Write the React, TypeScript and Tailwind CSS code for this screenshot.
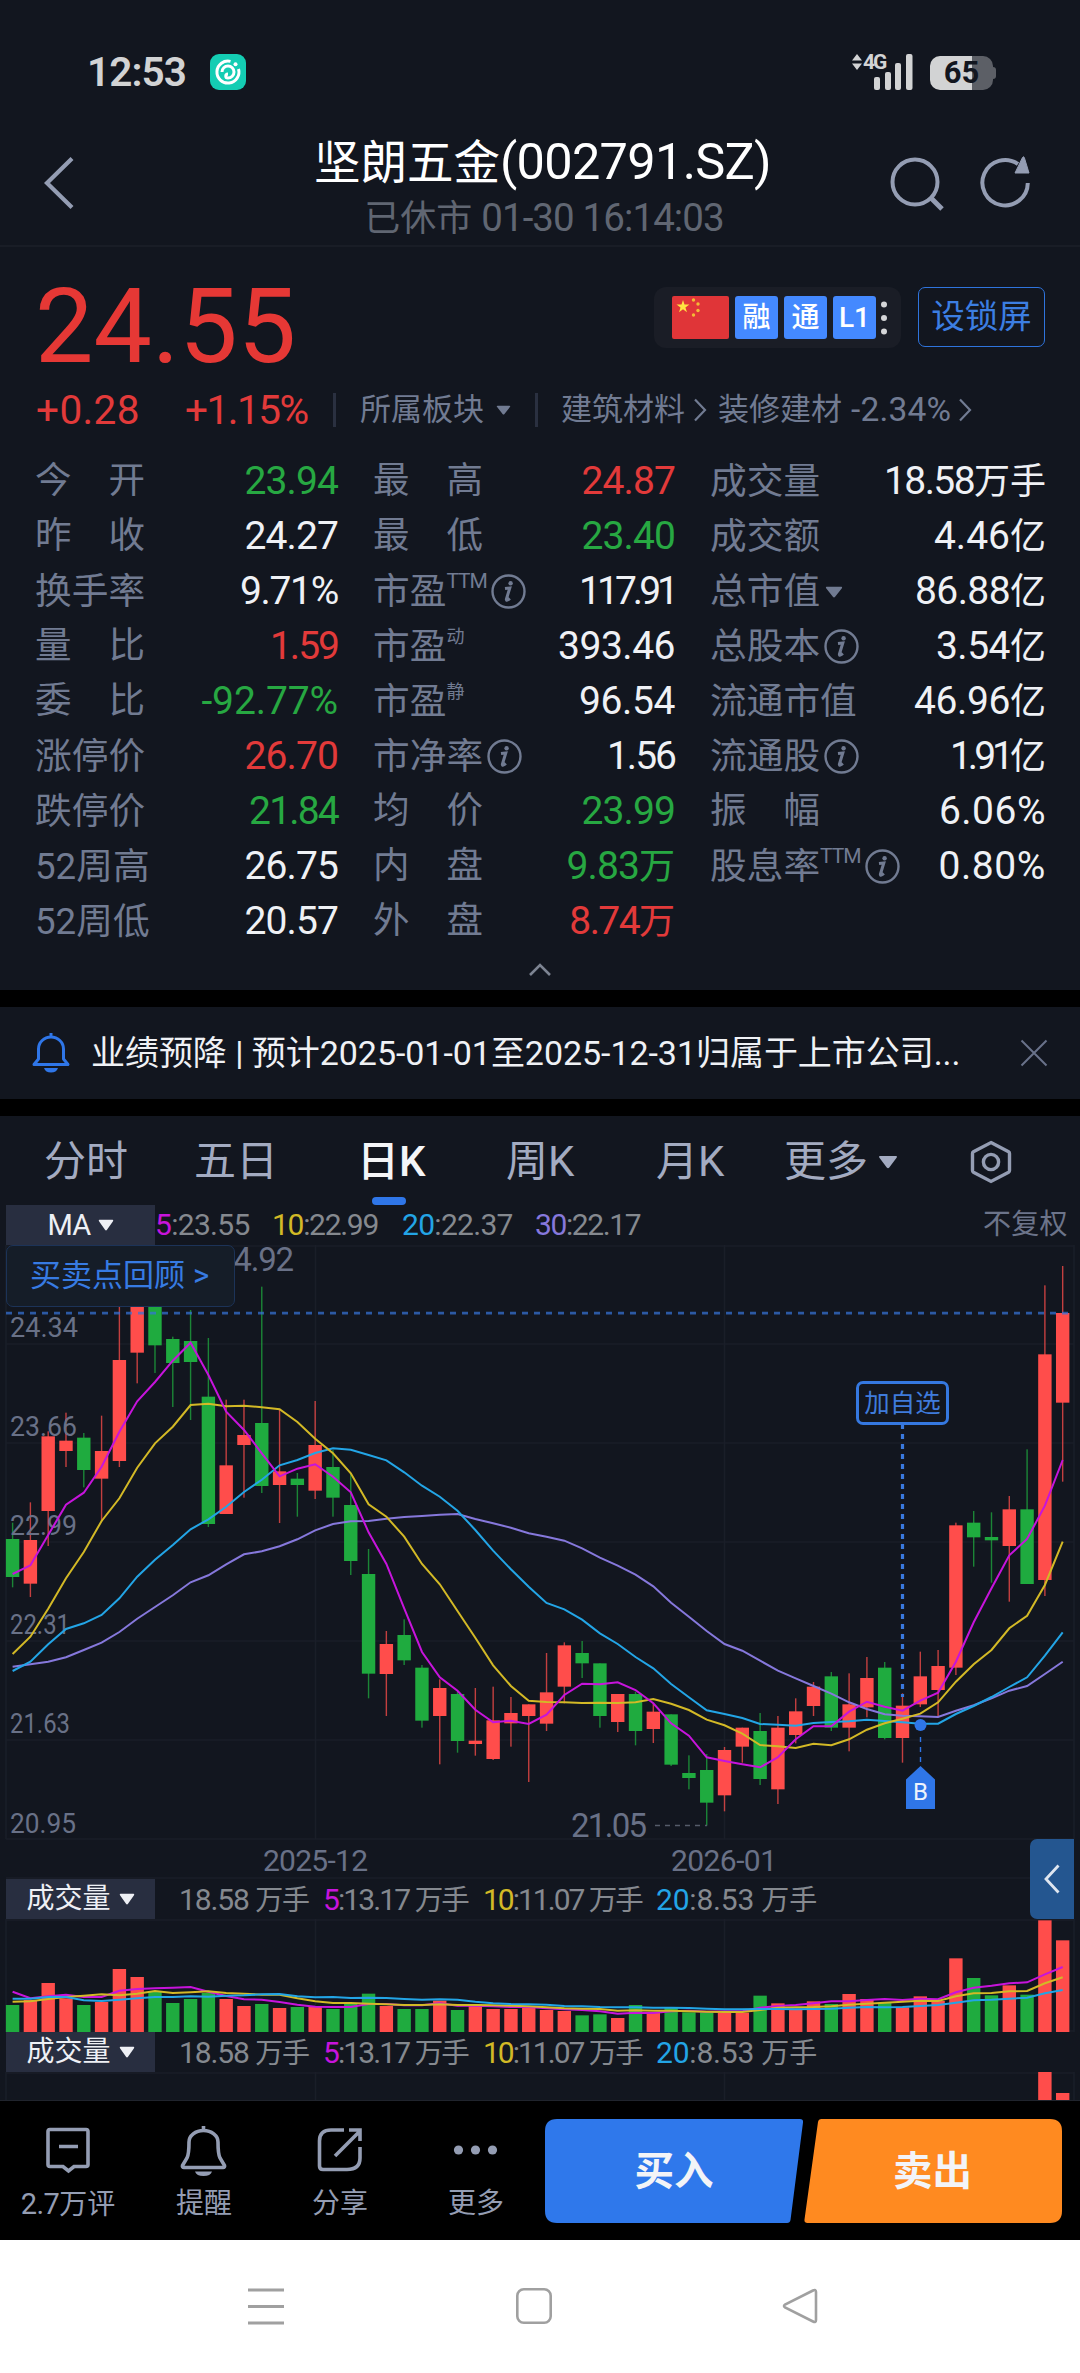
import React from "react";

const UP = "#ff4d4b";
const DOWN = "#1fab3f";
const GRID = "#1a1e28";

/* direction, high, open/close top, open/close bottom, low in thirds of a pixel */
type Candle = [number, number, number, number, number];
const CANDLES: Candle[] = [
  [0, 848, 897, 1011, 1042], [1, 787, 900, 1031, 1071], [1, 574, 589, 813, 918], [1, 518, 602, 633, 681],
  [0, 579, 593, 690, 742], [1, 527, 633, 716, 845], [1, 150, 360, 663, 681], [1, 100, 150, 338, 430],
  [0, 100, 150, 316, 399], [0, 290, 297, 369, 501], [0, 210, 303, 366, 540], [0, 294, 470, 852, 861],
  [1, 479, 676, 822, 822], [1, 479, 585, 615, 773], [0, 140, 549, 738, 759], [1, 510, 694, 735, 849],
  [0, 699, 716, 735, 830], [1, 483, 615, 752, 777], [0, 630, 681, 773, 830], [0, 700, 795, 963, 1005],
  [0, 927, 1002, 1301, 1375], [1, 1173, 1212, 1302, 1428], [0, 1138, 1185, 1261, 1275], [0, 1275, 1283, 1442, 1463],
  [1, 1318, 1344, 1428, 1573], [0, 1355, 1362, 1503, 1538], [1, 1344, 1502, 1512, 1547], [1, 1340, 1441, 1557, 1560],
  [1, 1371, 1419, 1450, 1520], [1, 1393, 1393, 1428, 1626], [1, 1239, 1357, 1451, 1473], [1, 1207, 1216, 1340, 1390],
  [0, 1203, 1239, 1270, 1314], [0, 1270, 1270, 1428, 1463], [1, 1362, 1362, 1446, 1476], [0, 1355, 1362, 1473, 1516],
  [1, 1390, 1415, 1467, 1509], [0, 1423, 1423, 1574, 1578], [0, 1546, 1599, 1614, 1648], [0, 1542, 1590, 1688, 1757],
  [1, 1521, 1530, 1666, 1714], [1, 1463, 1463, 1520, 1568], [0, 1419, 1473, 1617, 1635], [1, 1428, 1463, 1648, 1692],
  [1, 1375, 1414, 1485, 1510], [1, 1326, 1340, 1398, 1428], [0, 1296, 1309, 1463, 1473], [1, 1300, 1393, 1463, 1534],
  [1, 1251, 1314, 1402, 1432], [0, 1266, 1283, 1494, 1498], [1, 1360, 1397, 1494, 1568], [1, 1235, 1309, 1393, 1401],
  [1, 1230, 1278, 1350, 1430], [1, 848, 856, 1283, 1305], [0, 813, 848, 892, 980], [0, 817, 891, 901, 1028],
  [1, 768, 808, 918, 1085], [0, 628, 808, 1032, 1032], [1, 136, 343, 1020, 1068], [1, 78, 219, 488, 725],
];

const PRICE_MA: [string, number[]][] = [
  ["#8678dc", [1280, 1273, 1265, 1252, 1230, 1208, 1176, 1136, 1101, 1066, 1027, 1006, 973, 943, 934, 919, 898, 871, 852, 844, 843, 836, 831, 828, 824, 822, 837, 850, 863, 880, 890, 902, 925, 953, 977, 1004, 1039, 1088, 1130, 1173, 1212, 1232, 1262, 1292, 1315, 1338, 1361, 1387, 1407, 1423, 1427, 1429, 1431, 1412, 1396, 1375, 1352, 1338, 1302, 1265]],
  ["#23a5e6", [1293, 1265, 1213, 1167, 1150, 1125, 1075, 1010, 959, 915, 868, 838, 800, 756, 719, 676, 660, 639, 625, 629, 645, 661, 697, 737, 770, 812, 870, 932, 988, 1040, 1089, 1108, 1139, 1180, 1212, 1251, 1285, 1332, 1372, 1411, 1422, 1434, 1452, 1454, 1457, 1449, 1446, 1444, 1439, 1443, 1447, 1451, 1451, 1422, 1398, 1371, 1341, 1312, 1247, 1177]],
  ["#d3b926", [1242, 1190, 1106, 1015, 936, 843, 775, 683, 610, 560, 495, 491, 499, 497, 502, 508, 546, 596, 640, 700, 793, 830, 890, 972, 1033, 1113, 1193, 1276, 1338, 1382, 1386, 1387, 1389, 1388, 1389, 1387, 1377, 1391, 1410, 1439, 1456, 1481, 1515, 1519, 1524, 1511, 1516, 1498, 1469, 1450, 1436, 1421, 1387, 1325, 1273, 1230, 1165, 1127, 1035, 905]],
  ["#c714dc", [1002, 976, 885, 794, 758, 680, 575, 484, 426, 362, 308, 405, 515, 570, 640, 709, 686, 673, 710, 757, 877, 972, 1105, 1236, 1312, 1352, 1409, 1447, 1442, 1452, 1424, 1365, 1331, 1333, 1327, 1350, 1390, 1450, 1487, 1552, 1563, 1573, 1582, 1552, 1498, 1459, 1459, 1415, 1385, 1400, 1412, 1382, 1358, 1265, 1147, 1045, 946, 897, 797, 660]],
];

const VOLUMES = [405, 390, 339, 385, 405, 396, 297, 321, 363, 399, 387, 369, 387, 408, 402, 414, 411, 410, 417, 402, 371, 408, 417, 417, 392, 420, 402, 417, 417, 412, 420, 423, 436, 433, 444, 405, 428, 414, 427, 427, 428, 428, 377, 400, 416, 394, 402, 372, 387, 398, 412, 379, 393, 265, 324, 376, 346, 374, 151, 211];

const VOLUME_MA: [string, number[]][] = [
  ["#c714dc", [365, 385, 379, 374, 381, 381, 362, 357, 355, 353, 351, 365, 378, 388, 389, 396, 404, 410, 411, 411, 402, 402, 406, 406, 400, 407, 407, 409, 411, 411, 415, 418, 420, 424, 431, 428, 429, 424, 422, 425, 424, 424, 413, 408, 405, 400, 394, 394, 390, 387, 390, 386, 388, 367, 353, 347, 340, 337, 313, 291]],
  ["#d3b926", [395, 394, 387, 381, 377, 373, 376, 371, 363, 369, 367, 364, 369, 371, 374, 374, 385, 394, 399, 399, 401, 403, 405, 405, 403, 405, 405, 406, 407, 409, 412, 415, 416, 417, 422, 421, 422, 422, 424, 425, 426, 426, 420, 413, 412, 411, 409, 404, 401, 398, 395, 392, 393, 379, 370, 369, 364, 363, 340, 322]],
  ["#23a5e6", [386, 386, 381, 381, 391, 393, 389, 385, 381, 381, 379, 380, 377, 376, 373, 372, 379, 382, 381, 384, 383, 384, 387, 389, 388, 389, 395, 400, 402, 403, 404, 408, 409, 411, 412, 412, 413, 413, 414, 416, 418, 418, 417, 417, 418, 417, 416, 413, 411, 412, 411, 408, 405, 398, 391, 389, 386, 383, 370, 360]],
];

const cx = (i: number) => 12.6 + i * 17.798;
const line = (values: number[], offset: number) =>
  values.map((v, i) => `${cx(i).toFixed(1)},${(v / 3 - offset).toFixed(1)}`).join(" ");

const GREEN = "text-[#27a842]";
const RED = "text-[#e23a3a]";
const WHITE = "text-[#eff1f5]";

type Cell = { label: string; sup?: string; mark?: "info" | "drop"; value: string; unit?: string; tone: string; fit?: string };
const CELLS: (Cell | null)[] = [
  { label: "今开", value: "23.94", tone: GREEN },
  { label: "最高", value: "24.87", tone: RED },
  { label: "成交量", value: "18.58", unit: "万手", tone: WHITE, fit: "tracking-[-1.6px]" },
  { label: "昨收", value: "24.27", tone: WHITE },
  { label: "最低", value: "23.40", tone: GREEN },
  { label: "成交额", value: "4.46", unit: "亿", tone: WHITE, fit: "tracking-[0px]" },
  { label: "换手率", value: "9.71%", tone: WHITE, fit: "tracking-[-1.3px]" },
  { label: "市盈", sup: "TTM", mark: "info", value: "117.91", tone: WHITE, fit: "tracking-[-4px]" },
  { label: "总市值", mark: "drop", value: "86.88", unit: "亿", tone: WHITE, fit: "tracking-[-0.6px]" },
  { label: "量比", value: "1.59", tone: RED, fit: "tracking-[-2px]" },
  { label: "市盈", sup: "动", value: "393.46", tone: WHITE, fit: "tracking-[-0.5px]" },
  { label: "总股本", mark: "info", value: "3.54", unit: "亿", tone: WHITE, fit: "tracking-[-0.5px]" },
  { label: "委比", value: "-92.77%", tone: GREEN, fit: "tracking-[-0.1px]" },
  { label: "市盈", sup: "静", value: "96.54", tone: WHITE, fit: "tracking-[-0.4px]" },
  { label: "流通市值", value: "46.96", unit: "亿", tone: WHITE, fit: "tracking-[-0.4px]" },
  { label: "涨停价", value: "26.70", tone: RED },
  { label: "市净率", mark: "info", value: "1.56", tone: WHITE, fit: "tracking-[-2px]" },
  { label: "流通股", mark: "info", value: "1.91", unit: "亿", tone: WHITE, fit: "tracking-[-4px]" },
  { label: "跌停价", value: "21.84", tone: GREEN, fit: "tracking-[-1.8px]" },
  { label: "均价", value: "23.99", tone: GREEN },
  { label: "振幅", value: "6.06%", tone: WHITE, fit: "tracking-[0.5px]" },
  { label: "52周高", value: "26.75", tone: WHITE },
  { label: "内盘", value: "9.83", unit: "万", tone: GREEN },
  { label: "股息率", sup: "TTM", mark: "info", value: "0.80%", tone: WHITE, fit: "tracking-[0.6px]" },
  { label: "52周低", value: "20.57", tone: WHITE },
  { label: "外盘", value: "8.74", unit: "万", tone: RED, fit: "tracking-[-1.6px]" },
  null,
];

function InfoMark() {
  return (
    <svg className="ml-[4px] size-[35px] shrink-0" viewBox="0 0 35 35" fill="none">
      <circle cx="17.5" cy="17.5" r="16" stroke="#717b92" strokeWidth="2.4" />
      <circle cx="19.6" cy="9.3" r="2.2" fill="#717b92" />
      <path d="M14 14.600l4.800-.6-3.400 11.200c-.4 1.700 1.600 1 3.400-.8" stroke="#717b92" strokeWidth="3" />
    </svg>
  );
}

function Triangle({ className }: { className: string }) {
  return (
    <svg className={`shrink-0 ${className}`} viewBox="0 0 16 12" preserveAspectRatio="none">
      <path d="M1.6 0.8h12.8q1.4 0 .6 1.4l-6 8.6q-1 1.2-2 0l-6-8.6q-.8-1.4 .6-1.4z" fill="currentColor" />
    </svg>
  );
}

function Chevron({ className }: { className: string }) {
  return (
    <svg className={`h-6 w-3.5 shrink-0 ${className}`} viewBox="0 0 14 24" fill="none">
      <path d="M2 1.5l10 10.5-10 10.5" stroke="currentColor" strokeWidth="2.2" />
    </svg>
  );
}

function StatCell({ cell }: { cell: Cell }) {
  const spaced = cell.label.length === 2 && !cell.sup;
  return (
    <div className="flex h-[55px] items-center justify-between whitespace-nowrap">
      <div className="flex items-center text-[#717b92]">
        {spaced ? (
          <div className="flex w-[110px] justify-between text-[36.5px]">
            <span>{cell.label[0]}</span>
            <span>{cell.label[1]}</span>
          </div>
        ) : (
          <span className="text-[36.7px]">{cell.label}</span>
        )}
        {cell.sup && (
          <span className={cell.sup === "TTM" ? "-mt-[20px] text-[21px] tracking-[-1px]" : "-mt-[20px] text-[18px]"}>{cell.sup}</span>
        )}
        {cell.mark === "info" && <InfoMark />}
        {cell.mark === "drop" && <Triangle className="ml-[5px] h-[12px] w-[18px]" />}
      </div>
      <div className={`text-[39px] ${cell.tone}`}>
        <span className={cell.fit ?? "tracking-[-0.9px]"}>{cell.value}</span>
        {cell.unit && <span className="text-[36px]">{cell.unit}</span>}
      </div>
    </div>
  );
}

function StatusBar() {
  return (
    <div className="flex h-[108px] pt-[54px] pr-[84px] pl-[87px]">
      <span className="w-[123px] text-[40.5px] leading-[37px] font-semibold tracking-[-0.9px] text-[#d2d3d4]">12:53</span>
      <svg className="size-[36px]" viewBox="0 0 36 36" fill="none">
        <rect width="36" height="36" rx="9" fill="#14cdb3" />
        <path d="M20.5 7.4A11 11 0 1 0 28.5 15" stroke="#fff" strokeWidth="3" />
        <path d="M12 18a6 6 0 1 1 6 6c-3 0-3-4 0-4" stroke="#fff" strokeWidth="3" />
        <circle cx="25.5" cy="10.3" r="2" fill="#fff" />
      </svg>
      <div className="ml-auto flex">
        <svg className="h-[16px] w-[12px]" viewBox="0 0 12 16" fill="#d2d3d4">
          <path d="M6 0l5 6.5H1zM6 16l5-6.5H1z" />
        </svg>
        <span className="w-[10px] text-[21px] leading-[16px] font-bold tracking-[-2px] text-[#d2d3d4]">4G</span>
        <svg className="h-[36px] w-[41px]" viewBox="0 0 41 36" fill="#d2d3d4">
          <rect x="1" y="23" width="6" height="13" rx="2" />
          <rect x="12" y="18" width="6" height="18" rx="2" />
          <rect x="22" y="9" width="6" height="27" rx="2" />
          <rect x="33" y="0" width="6.5" height="36" rx="2" />
        </svg>
        <div className="mt-0.5 ml-[16px] flex h-[34px] w-[63px] items-center justify-center rounded-[10px] bg-linear-to-r from-[#d2d3d4] from-67% to-[#5c5f66] to-67% text-[31px] leading-[34px] font-bold text-[#12161f]">
          65
        </div>
        <div className="mt-[13px] h-[12px] w-[3px] rounded-r-full bg-[#5c5f66]" />
      </div>
    </div>
  );
}

function TitleBar() {
  return (
    <header className="grid h-[139px] grid-cols-[180px_1fr_200px] border-b-2 border-[#191d26]">
      <svg className="mt-[48px] ml-[43px] h-[54px] w-[32px]" viewBox="0 0 32 54" fill="none">
        <path d="M29 2.5L4 27l25 24.5" stroke="#949db3" strokeWidth="4.2" />
      </svg>
      <div className="flex flex-col items-center whitespace-nowrap">
        <h1 className="mt-[24px] ml-[25px] text-[46.500px] leading-[60px] text-white">
          坚朗五金<span className="text-[50.500px] tracking-[-0.7px]">(002791.SZ)</span>
        </h1>
        <p className="ml-[28px] text-[36px] leading-[50px] text-[#606672]">
          已休市 <span className="text-[38.500px] tracking-[-0.9px]">01-30 16:14:03</span>
        </p>
      </div>
      <div className="flex pt-[48px]">
        <svg className="ml-[9px] size-[58px]" viewBox="0 0 58 58" fill="none" stroke="#949db3" strokeWidth="4">
          <circle cx="26" cy="26" r="22.5" />
          <path d="M42 42l11 11" strokeWidth="5" />
        </svg>
        <svg className="ml-[32px] size-[56px]" viewBox="0 0 56 56" fill="none">
          <path d="M48.800 27A22.700 22.700 0 1 1 39 8" stroke="#949db3" strokeWidth="4" />
          <path d="M43.500 1.500q1-1.500 1.800 0L50 17H36z" fill="#949db3" stroke="#949db3" strokeLinejoin="round" />
        </svg>
      </div>
    </header>
  );
}

function Quote() {
  return (
    <section className="h-[205px] px-[35px]">
      <div className="flex h-[130px] justify-between">
        <div className="mt-[30px] text-[104px] leading-[100px] text-[#e63835]">24.55</div>
        <div className="mt-[40px] flex">
          <div className="flex h-[61px] w-[247px] items-center gap-[6px] rounded-[12px] bg-[#1a1d26] pl-[18px]">
            <svg className="h-[43px] w-[57px]" viewBox="0 0 57 43">
              <rect width="57" height="43" rx="2" fill="#e03538" />
              <path d="M11 4l1.5 4.6h4.9l-4 2.9 1.6 4.7-4-2.9-4 2.9 1.5-4.7-4-2.9h5z" fill="#ffe341" />
              <g fill="#f3bb36">
                <circle cx="21.5" cy="4" r="1.7" /><circle cx="26" cy="8" r="1.7" />
                <circle cx="26" cy="14.5" r="1.7" /><circle cx="21.5" cy="19" r="1.7" />
              </g>
            </svg>
            {["融", "通", "L1"].map((t) => (
              <span key={t} className="flex h-[43px] w-[43px] items-center justify-center rounded-[3px] bg-[#4489ff] text-[28px] font-medium text-white">{t}</span>
            ))}
            <svg className="-ml-[1px] h-[34px] w-[6px]" viewBox="0 0 6 34" fill="#d5d6d8">
              <circle cx="3" cy="3.5" r="3" /><circle cx="3" cy="17" r="3" /><circle cx="3" cy="30.5" r="3" />
            </svg>
          </div>
          <div className="ml-[17px] flex h-[60px] w-[127px] items-center justify-center rounded-[7px] border-[1.6px] border-[#2f74dd] text-[33.5px] text-[#3c7ee2]">设锁屏</div>
        </div>
      </div>
      <div className="mt-[8px] flex h-[50px] items-center whitespace-nowrap text-[#717b92]">
        <span className="w-[150px] pl-[1px] text-[40.500px] tracking-[0.4px] text-[#e23a3a]">+0.28</span>
        <span className="w-[148px] text-[40.500px] tracking-[-1.500px] text-[#e23a3a]">+1.15%</span>
        <span className="h-[34px] w-[3px] bg-[#2a3040]" />
        <span className="ml-[24px] text-[31px]">所属板块</span>
        <Triangle className="ml-[12px] h-[10px] w-[15px]" />
        <span className="ml-[24px] h-[34px] w-[3px] bg-[#2a3040]" />
        <span className="ml-[23px] text-[31px]">建筑材料</span>
        <Chevron className="ml-[8px]" />
        <span className="ml-[11px] text-[31px]">装修建材</span>
        <span className="ml-[9px] text-[33.5px] tracking-[0.2px]">-2.34%</span>
        <Chevron className="ml-[7px]" />
      </div>
    </section>
  );
}

function Tabs() {
  const base = "text-[#a3abc1]";
  return (
    <nav className="flex h-[89px] items-center pt-[3px] text-[42px] leading-[60px] whitespace-nowrap">
      <span className={`ml-[44px] w-[150px] ${base}`}>分时</span>
      <span className={`w-[163px] ${base}`}>五日</span>
      <span className="relative w-[149px] font-medium text-[#f4f5f8]">
        日K
        <i className="absolute top-[65px] left-[15px] h-[8px] w-[34px] rounded-full bg-[#2f76e8]" />
      </span>
      <span className={`w-[150px] ${base}`}>周K</span>
      <span className={`w-[128px] ${base}`}>月K</span>
      <span className={base}>更多</span>
      <Triangle className="ml-[10px] h-[14px] w-[20px] text-[#a3abc1]" />
      <svg className="ml-[72px] h-[44px] w-[42px]" viewBox="0 0 42 44" fill="none" stroke="#949db3" strokeWidth="3.4">
        <path d="M21 2.6l17.6 9.2q.9.5.9 1.6v17.2q0 1.100-.9 1.600L21 41.400 3.400 32.200q-.9-.5-.9-1.600V13.400q0-1.100.9-1.600z" />
        <circle cx="21" cy="22" r="7.600" />
      </svg>
    </nav>
  );
}

function Picker({ children, triangle }: { children: React.ReactNode; triangle: string }) {
  return (
    <div className="ml-[6px] flex h-[40px] w-[149px] items-center justify-center bg-[#282e40] text-[#eef0f5]">
      {children}
      <Triangle className={triangle} />
    </div>
  );
}

function PriceLegend() {
  return (
    <div className="flex h-[40px] items-center text-[30px] leading-[42px] tracking-[-0.7px] whitespace-nowrap text-[#85898f]">
      <Picker triangle="ml-[7px] h-[12px] w-[16px]">
        <span className="text-[29px]">MA</span>
      </Picker>
      <span className="w-[117px]"><b className="font-normal text-[#c714dc]">5</b>:23.55</span>
      <span className="w-[130px] tracking-[-1.300px]"><b className="font-normal text-[#d3b926]">10</b>:22.99</span>
      <span className="w-[133px]"><b className="font-normal text-[#23a5e6]">20</b>:22.37</span>
      <span className="w-[448px] tracking-[-1.400px]"><b className="font-normal text-[#8678dc]">30</b>:22.17</span>
      <span className="text-[28px] tracking-[0.2px] text-[#6c748a]">不复权</span>
    </div>
  );
}

function VolumeLegend() {
  return (
    <div className="flex h-[40px] items-center pt-[2px] text-[30px] leading-[40px] tracking-[-0.8px] whitespace-nowrap text-[#85898f]">
      <div className="-mt-[2px]">
        <Picker triangle="ml-[8px] h-[12px] w-[16px]">
          <span className="text-[28px] tracking-normal">成交量</span>
        </Picker>
      </div>
      <span className="ml-[24px] w-[144px] tracking-[-1.100px]">18.58 <i className="text-[28px] not-italic">万手</i></span>
      <span className="w-[160px] tracking-[-1.900px]"><b className="font-normal text-[#c714dc]">5</b>:13.17 <i className="text-[28.500px] not-italic">万手</i></span>
      <span className="w-[173px] tracking-[-2px]"><b className="font-normal text-[#d3b926]">10</b>:11.07 <i className="text-[28.500px] not-italic">万手</i></span>
      <span className="tracking-[-0.200px]"><b className="font-normal text-[#23a5e6]">20</b>:8.53 <i className="text-[28px] not-italic">万手</i></span>
    </div>
  );
}

const AXIS: [string, number, number][] = [
  ["24.34", 92, 68], ["23.66", 191, 67], ["22.99", 290, 67], ["22.31", 389, 60], ["21.63", 488, 60], ["20.95", 588, 66],
];

function PriceChart() {
  return (
    <div className="relative h-[634px]">
      <svg className="block h-[634px] w-[1080px]" viewBox="0 0 1080 634">
        <g stroke={GRID} strokeWidth="1.6" fill="none">
          <path d="M6 1H1074M6 99H1074M6 198H1074M6 297H1074M6 396H1074M6 495H1074M6 594H1074M6 633H1074" />
          <path d="M6 0V594M315.500 0V594M724.500 0V594M1074 0V594" />
        </g>
        {CANDLES.map(([up, high, top, bottom, low], i) => (
          <g key={i} fill={up ? UP : DOWN}>
            <rect x={cx(i) - 0.7} y={high / 3 - 5} width="1.400" height={(low - high) / 3} opacity="0.75" />
            <rect x={cx(i) - 6.7} y={top / 3 - 5} width="13.400" height={(bottom - top) / 3} />
          </g>
        ))}
        <g fill="#697187" fontSize="27.500">
          {AXIS.map(([t, y, w]) => (
            <text key={t} x="10" y={y} textLength={w} lengthAdjust="spacingAndGlyphs">{t}</text>
          ))}
        </g>
        {PRICE_MA.map(([color, values]) => (
          <polyline key={color} points={line(values, 5)} fill="none" stroke={color} strokeWidth="2" />
        ))}
        <path d="M6 68.200H1068" stroke="#3673d8" strokeOpacity="0.72" strokeWidth="2.800" strokeDasharray="6 6" />
        <g fill="#697187" fontSize="33">
          <text x="216" y="26" textLength="78">24.92</text>
          <text x="571" y="592" textLength="76">21.05</text>
        </g>
        <path d="M655 580.500H707" stroke="#565c6a" strokeWidth="1.500" strokeDasharray="5 5" />
        <g fill="#697187" fontSize="30">
          <text x="263" y="625.500" textLength="105">2025-12</text>
          <text x="671" y="625.500" textLength="106">2026-01</text>
        </g>
        <path d="M902.500 179V452" stroke="#3a79dd" strokeWidth="3.200" strokeDasharray="5 5" />
        <circle cx="920.500" cy="480" r="6" fill="#2f76e8" />
        <path d="M920.500 492V520" stroke="#2f76e8" strokeWidth="1.400" strokeDasharray="5 5" />
        <path d="M920.500 521L935 534.500V564H906V534.500z" fill="#2f76e8" />
        <text x="920.500" y="555" fontSize="24" fill="#eef3fc" textAnchor="middle">B</text>
      </svg>
      <div className="absolute top-[136px] left-[856px] flex h-[44px] w-[93px] items-center justify-center rounded-[7px] border-3 border-[#3578e0] bg-[#12161f] text-[25.500px] text-[#3f7bdb]">加自选</div>
      <div className="absolute top-0 left-[6px] flex h-[62px] w-[229px] items-center rounded-[7px] border border-[#1c3358] bg-[#151d28] pl-[23px] text-[31px] text-[#377be3]">
        买卖点回顾<span className="ml-[8px] text-[31px]">&gt;</span>
      </div>
      <div className="absolute top-[594px] left-[1030px] z-10 flex h-[80px] w-[44px] items-center justify-center rounded-l-[7px] bg-[#245690]">
        <svg className="h-[30px] w-[18px]" viewBox="0 0 18 30" fill="none">
          <path d="M15.500 1.500L3 15l12.500 13.500" stroke="#dfe6f0" strokeWidth="2.800" />
        </svg>
      </div>
    </div>
  );
}

function VolumeChart() {
  return (
    <svg className="block h-[113px] w-[1080px]" viewBox="0 0 1080 113">
      <path d="M6 1H1074M6 0V113M315.500 0V113M724.500 0V113M1074 0V113M6 112H1074" stroke={GRID} strokeWidth="1.600" />
      {VOLUMES.map((v, i) => {
        const y = v / 3 - 49;
        return <rect key={i} x={cx(i) - 6.7} y={y} width="13.400" height={113 - y} fill={CANDLES[i][0] ? UP : DOWN} />;
      })}
      {VOLUME_MA.map(([color, values]) => (
        <polyline key={color} points={line(values, 49)} fill="none" stroke={color} strokeWidth="2" />
      ))}
    </svg>
  );
}

function ActionBar() {
  const item = "flex w-[136px] flex-col items-center text-[28px] leading-[36px] text-[#949db3]";
  const icon = "mt-[22px] mb-[9px] h-[54px] w-[54px]";
  return (
    <footer className="flex h-[139px] bg-black">
      <div className={`${item} whitespace-nowrap`}>
        <svg className={icon} viewBox="0 0 54 54" fill="none" stroke="#949db3" strokeWidth="3.600">
          <path d="M9 6.500h36q2 0 2 2v33q0 2-2 2H33L27.500 48 22 43.500H9q-2 0-2-2v-33q0-2 2-2zM18 23.500h19" />
        </svg>
        <span><i className="text-[29px] tracking-[-0.600px] not-italic">2.7</i>万评</span>
      </div>
      <div className={item}>
        <svg className={icon} viewBox="0 0 54 54" fill="none" stroke="#949db3" strokeWidth="3.600">
          <path d="M26.500 3v5M10 35q2-4 2-16a14.500 11.500 0 0 1 29 0q0 12 2 16l4.500 7.500q.5 2-1.500 2H7q-2 0-1.500-2z" />
          <path d="M18 48.500h17q-1.500 4.500-8.500 4.500T18 48.500z" fill="#949db3" stroke="none" />
        </svg>
        提醒
      </div>
      <div className={item}>
        <svg className={icon} viewBox="0 0 54 54" fill="none" stroke="#949db3" strokeWidth="3.600">
          <path d="M31 7H18Q6.500 7 6.500 18v25q0 3.500 3.500 3.500h24Q47 46.500 47 35V24" />
          <path d="M22 33L46 9M36 7h11v11" />
        </svg>
        分享
      </div>
      <div className={item}>
        <svg className={icon} viewBox="0 0 54 54" fill="#949db3">
          <circle cx="9.500" cy="27" r="4.600" /><circle cx="26.500" cy="27" r="4.600" /><circle cx="43.500" cy="27" r="4.600" />
        </svg>
        更多
      </div>
      <div className="relative mt-[18px] ml-[1px] h-[104px] w-[517px]">
        <svg className="absolute inset-0 h-full w-full" viewBox="0 0 517 104">
          <path d="M12 0H255q3.500 0 3 3.500L245.500 101q-.5 3-3.500 3H12Q0 104 0 92V12Q0 0 12 0z" fill="#2f78eb" />
          <path d="M276.500 0H505q12 0 12 12v80q0 12-12 12H262.500q-3.500 0-3-3.500L273 3q.5-3 3.500-3z" fill="#ff8a20" />
        </svg>
        <div className="relative flex h-full items-center pt-[2px] text-[39.500px] font-bold text-[#f3f4f7]">
          <span className="w-[258px] text-center">买入</span>
          <span className="w-[259px] text-center">卖出</span>
        </div>
      </div>
    </footer>
  );
}

export default function App() {
  return (
    <main className="h-[2373px] w-[1080px] overflow-hidden bg-black font-['Roboto','Noto_Sans_CJK_SC',sans-serif]">
      <div className="h-[990px] bg-[#12161f]">
        <StatusBar />
        <TitleBar />
        <Quote />
        <section className="grid grid-cols-[303px_302px_336px] gap-x-[35px] px-[35px] pt-[2px]">
          {CELLS.map((cell, i) => (cell ? <StatCell key={i} cell={cell} /> : <div key={i} />))}
        </section>
        <svg className="mx-auto mt-[13px] h-[15px] w-[24px]" viewBox="0 0 24 15" fill="none">
          <path d="M2 13L12 3l10 10" stroke="#7d8492" strokeWidth="2.600" />
        </svg>
      </div>
      <section className="mt-[17px] flex h-[92px] items-center bg-[#12161f] pr-[32px] pl-[31px]">
        <svg className="h-[40px] w-[40px]" viewBox="0 0 40 40" fill="none" stroke="#2f76e8" strokeWidth="3">
          <path d="M20 0v4M7.500 26V16a12.500 12 0 0 1 25 0v10l4.500 5.500H3z" strokeLinejoin="round" />
          <path d="M13 35h14q-1.500 4.500-7 4.500T13 35z" fill="#2f76e8" stroke="none" />
        </svg>
        <p className="ml-[20px] w-[880px] text-[34px] tracking-[-0.05px] whitespace-nowrap text-[#eff1f5]">
          业绩预降 | 预计2025-01-01至2025-12-31归属于上市公司...
        </p>
        <svg className="ml-auto h-[28px] w-[28px]" viewBox="0 0 28 28" stroke="#69728a" strokeWidth="2">
          <path d="M1.500 1.500l25 25M26.500 1.500l-25 25" />
        </svg>
      </section>
      <section className="mt-[17px] bg-[#12161f]">
        <Tabs />
        <PriceLegend />
        <PriceChart />
        <VolumeLegend />
        <VolumeChart />
        <VolumeLegend />
        <svg className="block h-[29px] w-[1080px]" viewBox="0 0 1080 29">
          <path d="M6 1H1074M6 0V28M315.500 0V28M724.500 0V28M1074 0V28" stroke={GRID} strokeWidth="1.600" />
          <path d="M0 28.500H1080" stroke="#20242d" />
          <rect x={cx(58) - 6.7} y="0" width="13.400" height="28" fill={UP} />
          <rect x={cx(59) - 6.7} y="21" width="13.400" height="7" fill={UP} />
        </svg>
      </section>
      <ActionBar />
      <nav className="flex h-[133px] bg-white">
        <svg className="mt-[48px] ml-[248px] h-[38px] w-[36px]" viewBox="0 0 36 38" stroke="#a0a0a0" strokeWidth="3.200">
          <path d="M0 2h36M0 18.500h36M0 35h36" />
        </svg>
        <svg className="mt-[47px] ml-[231px] h-[38px] w-[38px]" viewBox="0 0 38 38" fill="none" stroke="#a0a0a0" strokeWidth="2.600">
          <rect x="2.300" y="2.300" width="33.400" height="33.400" rx="6.500" />
        </svg>
        <svg className="mt-[47px] ml-[229px] h-[38px] w-[36px]" viewBox="0 0 36 38" fill="none" stroke="#a0a0a0" strokeWidth="2.600">
          <path d="M31 3.500q3-1.500 3 1.500v28q0 3-3 1.500L3 20.500q-2-1.500 0-3z" />
        </svg>
      </nav>
    </main>
  );
}
